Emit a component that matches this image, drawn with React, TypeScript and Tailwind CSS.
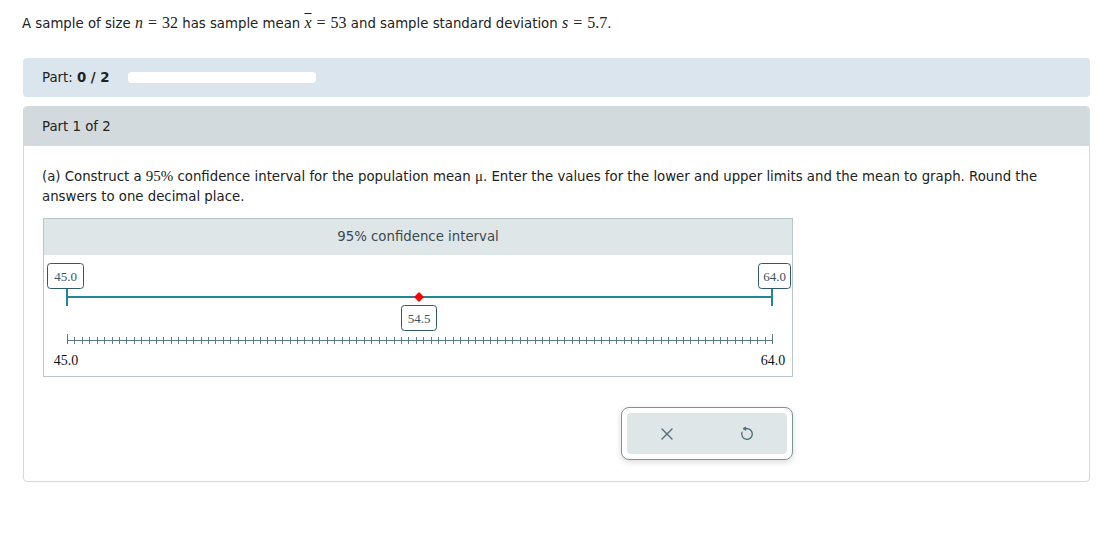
import React from "react";

const serif = "font-['Liberation_Serif','Times_New_Roman',serif]";

const ticks = Array.from({ length: 96 }, (_, i) => 23 + (i * 705) / 95);

const LabelBox = ({ x, y, w, text }: { x: number; y: number; w: number; text: string }) => (
  <g>
    <rect x={x} y={y} width={w} height={25} rx={3} fill="#fff" stroke="#2f5966" strokeWidth={1} />
    <text x={x + w / 2} y={y + 17} textAnchor="middle" fontFamily="Liberation Serif, serif" fontSize={13} fill="#3a5560">
      {text}
    </text>
  </g>
);

const IntervalGraph = () => (
  <div className="w-[750px] border border-[#b9c7cd] bg-white">
    <div className="h-[36px] bg-[#dfe6e8] flex items-center justify-center text-[13.3px] text-[#3b4a50]">
      95% confidence interval
    </div>
    <svg width="748" height="121" className="block">
      <LabelBox x={3.5} y={8.5} w={36} text="45.0" />
      <LabelBox x={714.5} y={8.5} w={32} text="64.0" />
      <line x1={23} y1={42} x2={728} y2={42} stroke="#1f8797" strokeWidth={2} />
      <line x1={23} y1={34} x2={23} y2={51} stroke="#1f8797" strokeWidth={2} />
      <line x1={728} y1={34} x2={728} y2={51} stroke="#1f8797" strokeWidth={2} />
      <polygon points="375,37 380,42 375,47 370,42" fill="#f00" />
      <LabelBox x={357.5} y={50.5} w={35} text="54.5" />
      <line x1={23} y1={85.5} x2={728} y2={85.5} stroke="#5b7b86" strokeWidth={1} />
      {ticks.map((t, i) => {
        const end = i === 0 || i === ticks.length - 1;
        const x = Math.round(t) + 0.5;
        return <line key={i} x1={x} y1={end ? 79 : 82} x2={x} y2={89} stroke="#5b7b86" strokeWidth={1} />;
      })}
      <text x={22} y={110} textAnchor="middle" fontFamily="Liberation Serif, serif" fontSize={14} fill="#111">
        45.0
      </text>
      <text x={729} y={110} textAnchor="middle" fontFamily="Liberation Serif, serif" fontSize={14} fill="#111">
        64.0
      </text>
    </svg>
  </div>
);

const ResetIcon = () => (
  <svg width="16" height="16" viewBox="0 0 24 24" fill="none" stroke="#4f6e78" strokeWidth="2" strokeLinecap="round" strokeLinejoin="round">
    <path d="M7 4h5" />
    <path d="M10 2l-3 2 3 2" />
    <path d="M12 4a8 8 0 1 1-7.5 5.2" />
  </svg>
);

const Eq = ({ v, italic, bar }: { v: string; italic: string; bar?: boolean }) => (
  <span className={`${serif} text-[16px]`}>
    <span className={bar ? "italic overline" : "italic"}>{italic}</span>
    <span className="px-[5px]">=</span>
    {v}
  </span>
);

export default function App() {
  return (
    <div className="min-h-screen bg-white pl-[23px] pr-[28px] pt-[13px] text-[13.3px] leading-5 text-[#222] font-['Verdana','DejaVu_Sans',sans-serif]">
      <p className="-ml-px">
        A sample of size <Eq italic="n" v="32" /> has sample mean <Eq italic="x" v="53" bar /> and sample standard deviation{" "}
        <Eq italic="s" v="5.7" />.
      </p>

      <div className="mt-[24px] h-[39px] rounded bg-[#dbe5ee] flex items-center pl-[19px] gap-[18px]">
        <span>
          Part: <b>0 / 2</b>
        </span>
        <div className="h-[11px] w-[188px] rounded-sm bg-white" />
      </div>

      <div className="mt-[9px] rounded border border-[#d3dadd] overflow-hidden">
        <div className="h-[39px] bg-[#d3dadd] flex items-center pl-[18px]">Part 1 of 2</div>
        <div className="pl-[18px] pr-[20px] pt-[20px] pb-[21px]">
          <p>
            (a) Construct a <span className={`${serif} text-[15px]`}>95%</span> confidence interval for the population mean{" "}
            <span className={`${serif} text-[15px]`}>μ</span>. Enter the values for the lower and upper limits and the mean to graph. Round the
            answers to one decimal place.
          </p>
          <div className="mt-[11px] ml-[1px]">
            <IntervalGraph />
          </div>
          <div className="w-[751px] flex justify-end mt-[30px]">
            <div className="w-[172px] h-[53px] rounded-lg border border-[#7f929a] bg-white p-[5px] shadow-[0_2px_6px_rgba(0,0,0,0.15)]">
              <div className="h-full rounded bg-[#dfe6e8] flex items-center justify-around text-[#4f6e78]">
                <svg width="14" height="14" viewBox="0 0 14 14" stroke="#4f6e78" strokeWidth="1.4" strokeLinecap="round">
                  <path d="M2 2l10 10M12 2L2 12" />
                </svg>
                <ResetIcon />
              </div>
            </div>
          </div>
        </div>
      </div>
    </div>
  );
}
